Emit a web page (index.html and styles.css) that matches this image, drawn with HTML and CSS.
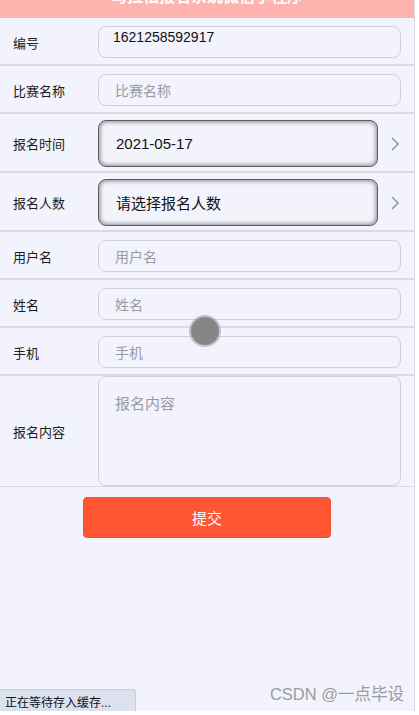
FILE: index.html
```html
<!DOCTYPE html>
<html lang="zh">
<head>
  <meta charset="UTF-8">
  <title>报名</title>
  <link rel="stylesheet" href="styles.css">
</head>
<body>
  <div class="page">
    <!-- barre de titre (coupée en haut) -->
    <div class="titre">
      <span class="retour">&lt;</span>
      <span class="titre-texte">马拉松报名系统微信小程序</span>
    </div>

    <div class="ligne">
      <div class="label">编号</div>
      <div class="champ valeur">1621258592917</div>
    </div>
    <div class="ligne">
      <div class="label">比赛名称</div>
      <div class="champ vide">比赛名称</div>
    </div>
    <div class="ligne picker-ligne">
      <div class="label">报名时间</div>
      <div class="picker">2021-05-17</div>
      <svg class="fleche" width="10" height="16" viewBox="0 0 10 16"><polyline points="2,2 8,8 2,14" fill="none" stroke="#8b9bab" stroke-width="1.6"/></svg>
    </div>
    <div class="ligne picker-ligne">
      <div class="label">报名人数</div>
      <div class="picker">请选择报名人数</div>
      <svg class="fleche" width="10" height="16" viewBox="0 0 10 16"><polyline points="2,2 8,8 2,14" fill="none" stroke="#8b9bab" stroke-width="1.6"/></svg>
    </div>
    <div class="ligne">
      <div class="label">用户名</div>
      <div class="champ vide">用户名</div>
    </div>
    <div class="ligne">
      <div class="label">姓名</div>
      <div class="champ vide">姓名</div>
    </div>
    <div class="ligne">
      <div class="label">手机</div>
      <div class="champ vide">手机</div>
    </div>
    <div class="ligne zone-ligne">
      <div class="label">报名内容</div>
      <div class="zone vide">报名内容</div>
    </div>

    <div class="actions">
      <button class="envoyer">提交</button>
    </div>

    <div class="toucher"></div>
    <div class="statut">正在等待存入缓存...</div>
    <div class="filigrane">CSDN @一点毕设</div>
  </div>
</body>
</html>
```

FILE: styles.css
```css
body {
  margin: 0;
  background: #ffffff;
  font-family: "Liberation Sans", "Noto Sans CJK SC", sans-serif;
}

.page {
  position: relative;
  width: 414px;
  height: 711px;
  overflow: hidden;
  background: #f2f3fc;
  border-right: 1px solid #d6d7e0;
}

.titre {
  height: 44px;
  margin-top: -26px;
  background: #ffb3ae;
  color: white;
  display: flex;
  align-items: center;
  justify-content: center;
  position: relative;
}

.titre-texte {
  font-size: 16px;
  font-weight: bold;
  margin-top: -3px;
}

.retour {
  position: absolute;
  left: 14px;
  top: 3px;
  font-size: 20px;
}

.ligne {
  display: flex;
  align-items: center;
  padding: 8px 13px 6px 0;
  border-bottom: 2px solid #d9dae4;
}

.label {
  width: 85px;
  padding-left: 13px;
  font-size: 13px;
  color: #1c1c1c;
  flex-shrink: 0;
}

.champ {
  flex: 1;
  height: 32px;
  box-sizing: border-box;
  border: 1px solid #cdcfdd;
  border-radius: 8px;
  padding: 0 16px;
  font-size: 14px;
  display: flex;
  align-items: center;
}

.champ.valeur {
  align-items: flex-start;
  padding: 2px 14px 0;
  color: #111;
}

.vide {
  color: #9a9aa2;
}

.picker-ligne {
  padding: 6px 13px 4px 0;
}

.picker {
  width: 280px;
  height: 47px;
  box-sizing: border-box;
  border: 1px solid #5c5c5c;
  border-radius: 8px;
  padding: 0 17px;
  font-size: 15px;
  color: #111;
  display: flex;
  align-items: center;
  background: #f3f4fb;
  box-shadow: inset 0 0 4px 1px rgba(0, 0, 0, 0.45);
}

.fleche {
  margin-left: 12px;
}

.zone-ligne {
  padding: 0 13px 0 0;
  border-bottom: 1px solid #d9dae4;
}

.zone {
  flex: 1;
  height: 110px;
  box-sizing: border-box;
  border: 1px solid #cdcfdd;
  border-radius: 8px;
  padding: 15px 16px;
  font-size: 15px;
}

.actions {
  display: flex;
  justify-content: flex-start;
  padding: 10px 0 0 83px;
}

.envoyer {
  width: 248px;
  height: 41px;
  background: #ff5533;
  color: white;
  border: 1px solid #f0502f;
  border-radius: 4px;
  font-size: 15px;
  font-family: "Noto Sans CJK SC", sans-serif;
}

.toucher {
  position: absolute;
  left: 191px;
  top: 317px;
  width: 28px;
  height: 28px;
  border-radius: 50%;
  background: #868686;
  box-shadow: 0 0 0 2px rgba(150, 150, 150, 0.5);
}

.statut {
  position: absolute;
  left: 0;
  bottom: 0;
  width: 136px;
  height: 22px;
  box-sizing: border-box;
  padding: 3px 0 0 5px;
  background: #dbe1ee;
  border: 1px solid #c8cedc;
  border-left: none;
  border-bottom: none;
  border-top-right-radius: 3px;
  font-size: 12px;
  color: #111;
}

.filigrane {
  position: absolute;
  right: 10px;
  bottom: 6px;
  font-size: 16.5px;
  color: #9b9ba0;
}
```
